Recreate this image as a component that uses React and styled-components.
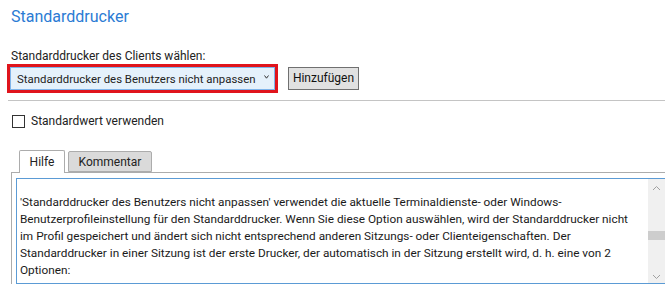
import React from 'react';
import styled, { createGlobalStyle } from 'styled-components';

const accent = '#2b7bd4';
const font = 'Roboto, "Noto Sans", "DejaVu Sans", sans-serif';

const Global = createGlobalStyle`
    html, body {
        margin: 0;
        padding: 0;
        background: #fff;
    }
    body {
        width: 665px;
        height: 287px;
        overflow: hidden;
        font-family: ${font};
        font-size: 12px;
        color: #222;
    }
`;

const Page = styled.div`
    display: flex;
    flex-direction: column;
    padding-top: 7px;
`;

const Title = styled.h1`
    margin: 0 0 0 11px;
    font-size: 16px;
    font-weight: 400;
    line-height: 20px;
    color: ${accent};
`;

const Label = styled.div`
    margin: 21px 0 0 11px;
    line-height: 16px;
    color: #222;
`;

const PickerRow = styled.div`
    display: flex;
    align-items: center;
    gap: 10px;
    margin: 0 0 0 7px;
`;

const Highlight = styled.div`
    border: 3px solid #e0141c;
    display: flex;
`;

const Select = styled.div`
    width: 265px;
    height: 23px;
    box-sizing: border-box;
    border: 1px solid #7eb4ea;
    background: #e5f1fb;
    display: flex;
    align-items: center;
    justify-content: space-between;
    padding: 0 5px 0 6px;
    white-space: nowrap;
    font-size: 11.4px;
    svg{
        flex: none;
        margin-top: -3px;
    }
`;

const Button = styled.button`
    height: 23px;
    width: 71px;
    box-sizing: border-box;
    border: 1px solid #707070;
    background: #e1e1e1;
    font-family: ${font};
    font-size: 12px;
    color: #111;
    padding: 0;
    margin-top: -1px;
`;

const Rule = styled.hr`
    border: 0;
    border-top: 1px solid #c4c4c4;
    margin: 7px 0 0 8px;
`;

const CheckRow = styled.label`
    display: flex;
    align-items: center;
    gap: 6px;
    margin: 13px 0 0 12px;
    line-height: 14px;
    .box{
        width: 13px;
        height: 13px;
        box-sizing: border-box;
        border: 1px solid #333;
        background: #fff;
    }
`;

const TabBar = styled.div`
    display: flex;
    align-items: flex-end;
    gap: 3px;
    margin: 22px 0 0 19px;
    height: 22px;
`;

const Tab = styled.div`
    box-sizing: border-box;
    height: ${p => p.active ? '23px' : '21px'};
    width: ${p => p.w}px;
    justify-content: center;
    border: 1px solid #acacac;
    border-bottom: ${p => p.active ? '0' : '1px solid #acacac'};
    border-radius: 2px 2px 0 0;
    background: ${p => p.active ? '#fff' : '#dadada'};
    display: flex;
    align-items: center;
    color: #222;
    position: relative;
    z-index: ${p => p.active ? 2 : 1};
    margin-bottom: ${p => p.active ? '-1px' : '0'};
`;

const Panel = styled.div`
    margin-left: 11px;
    border-top: 1px solid #acacac;
    border-left: 1px solid #acacac;
    padding: 5px 0 0 4px;
`;

const TextBox = styled.div`
    display: flex;
    height: 106px;
    border: 1px solid #5b9bd5;
    border-right: 0;
    box-sizing: border-box;
`;

const HelpText = styled.p`
    flex: 1;
    margin: 0;
    padding: 15px 0 0 3px;
    line-height: 17px;
    font-size: 11.8px;
    white-space: nowrap;
    overflow: hidden;
    color: #1a1a1a;
`;

const Scrollbar = styled.div`
    width: 17px;
    background: #f0f0f0;
    display: flex;
    flex-direction: column;
    align-items: center;
    justify-content: space-between;
    padding: 6px 0 3px;
    box-sizing: border-box;
    .track{
        flex: 1;
        width: 100%;
        display: flex;
        flex-direction: column;
        justify-content: center;
        padding-top: 6px;
    }
    .thumb{
        height: 9px;
        background: #cdcdcd;
    }
`;

const Chevron = ({ up }) => (
    <svg width="9" height="6" viewBox="0 0 9 6">
        <path d={up ? 'M1 5 L4.5 1.5 L8 5' : 'M1 1 L4.5 4.5 L8 1'} fill="none" stroke="#a0a0a0" strokeWidth="1" />
    </svg>
);

const Caret = () => (
    <svg width="5" height="4" viewBox="0 0 5 4">
        <path d="M0.5 0.5 L2.5 3.2 L4.5 0.5" fill="none" stroke="#333" strokeWidth="1" />
    </svg>
);

export default function App() {
    return (
        <Page>
            <Global />
            <Title>Standarddrucker</Title>
            <Label>Standarddrucker des Clients wählen:</Label>
            <PickerRow>
                <Highlight>
                    <Select>
                        <span>Standarddrucker des Benutzers nicht anpassen</span>
                        <Caret />
                    </Select>
                </Highlight>
                <Button>Hinzufügen</Button>
            </PickerRow>
            <Rule />
            <CheckRow>
                <span className="box" />
                Standardwert verwenden
            </CheckRow>
            <TabBar>
                <Tab active w={46}>Hilfe</Tab>
                <Tab w={84}>Kommentar</Tab>
            </TabBar>
            <Panel>
                <TextBox>
                    <HelpText>
                        'Standarddrucker des Benutzers nicht anpassen' verwendet die aktuelle Terminaldienste- oder Windows-<br />
                        Benutzerprofileinstellung für den Standarddrucker. Wenn Sie diese Option auswählen, wird der Standarddrucker nicht<br />
                        im Profil gespeichert und ändert sich nicht entsprechend anderen Sitzungs- oder Clienteigenschaften. Der<br />
                        Standarddrucker in einer Sitzung ist der erste Drucker, der automatisch in der Sitzung erstellt wird, d. h. eine von 2<br />
                        Optionen:
                    </HelpText>
                    <Scrollbar>
                        <Chevron up />
                        <div className="track"><div className="thumb" /></div>
                        <Chevron />
                    </Scrollbar>
                </TextBox>
            </Panel>
        </Page>
    );
}
